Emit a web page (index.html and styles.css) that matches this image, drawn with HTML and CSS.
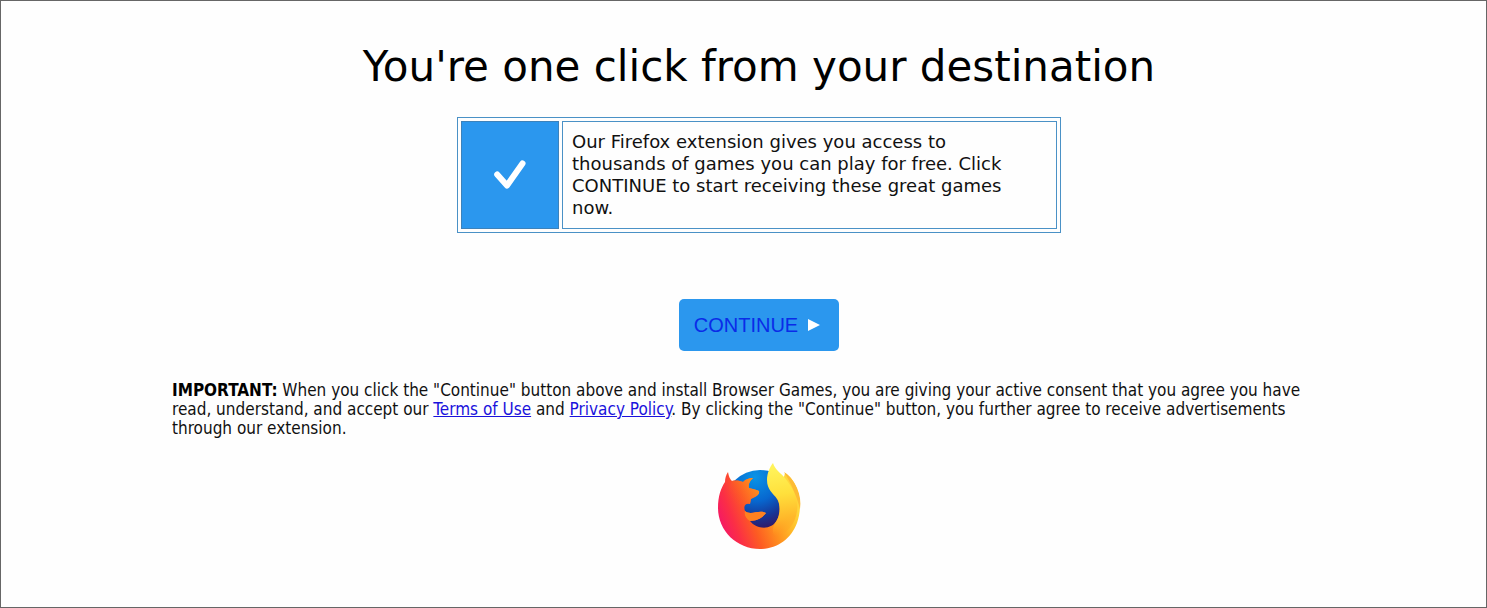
FILE: index.html
```html
<!DOCTYPE html>
<html lang="en">
<head>
<meta charset="utf-8">
<meta name="viewport" content="width=device-width, initial-scale=1">
<title>Browser Games</title>
<link rel="stylesheet" href="styles.css">
</head>
<body>
<main class="page">
  <h1 class="title">You're one click from your destination</h1>
  <section class="notice">
    <div class="notice-icon">
      <svg class="check" viewBox="0 0 32 30" aria-hidden="true"><path d="M3.200 14.500L13 25.500L28.500 3.500" fill="none" stroke="#fff" stroke-width="6" stroke-linecap="round" stroke-linejoin="round"/></svg>
    </div>
    <p class="notice-text">Our Firefox extension gives you access to thousands of games you can play for free. Click CONTINUE to start receiving these great games now.</p>
  </section>
  <button class="continue" type="button">CONTINUE
    <svg class="arrow" viewBox="0 0 12 12" aria-hidden="true"><path d="M0 0L12 6L0 12Z" fill="#fff"/></svg>
  </button>
  <p class="terms"><strong>IMPORTANT:</strong> When you click the "Continue" button above and install Browser Games, you are giving your active consent that you agree you have read, understand, and accept our <a href="#terms">Terms of Use</a> and <a href="#privacy">Privacy Policy</a>. By clicking the "Continue" button, you further agree to receive advertisements through our extension.</p>
  <svg class="logo" viewBox="0 0 84 88" role="img" aria-label="Firefox">
    <defs>
      <radialGradient id="globe" gradientUnits="userSpaceOnUse" cx="38" cy="14" r="54">
        <stop offset="0" stop-color="#0a94e6"/><stop offset=".45" stop-color="#0767cf"/><stop offset=".75" stop-color="#173596"/><stop offset="1" stop-color="#36145f"/>
      </radialGradient>
      <linearGradient id="body" gradientUnits="userSpaceOnUse" x1="2" y1="64" x2="76" y2="36">
        <stop offset="0" stop-color="#f4146a"/><stop offset=".2" stop-color="#fb2f45"/><stop offset=".42" stop-color="#fd5c22"/><stop offset=".65" stop-color="#ff8f1e"/><stop offset=".85" stop-color="#ffbb28"/><stop offset="1" stop-color="#ffd53a"/>
      </linearGradient>
      <linearGradient id="face" gradientUnits="userSpaceOnUse" x1="16" y1="38" x2="38" y2="24">
        <stop offset="0" stop-color="#fb4a30" stop-opacity="0"/><stop offset="1" stop-color="#ff8a1c"/>
      </linearGradient>
      <linearGradient id="tail" gradientUnits="userSpaceOnUse" x1="58" y1="4" x2="68" y2="72">
        <stop offset="0" stop-color="#fff35a"/><stop offset=".4" stop-color="#ffe03c"/><stop offset=".75" stop-color="#ffb82a"/><stop offset="1" stop-color="#ff9a20" stop-opacity="0"/>
      </linearGradient>
    </defs>
    <circle cx="43" cy="43" r="36" fill="url(#globe)"/>
    <path d="M11 9C12 14 13 16 15 18C19 17 24 18 26 19C29 16 32 15 36 15C33 18 31 21 32 25C36 26 40 27 42 28C43 32 38 34 34 36L33 41C29 40 26 42 28 48C34 53 42 46 49 50C46 54 41 58 33 58C40 67 55 67 60 57C63 51 63 43 61 37L68 10C73 13 77 18 80 26C84 37 84 48 80 60C74 76 60 86 43 86C20 86 1 68 1 45C1 33 4 25 8 19C8 15 9 12 11 9Z" fill="url(#body)"/>
    <path d="M15 18C19 17 24 18 26 19C29 16 32 15 36 15C33 18 31 21 32 25C36 26 40 27 42 28C43 32 38 34 34 36L33 41C28 39 23 41 18 42C12 36 9 27 15 18Z" fill="url(#face)"/>
    <path d="M28 48C34 53 42 46 49 50C46 54 41 58 33 58C29 56 27 52 28 48Z" fill="#ff8120"/>
    <path d="M56 0C58 7 64 10 68 15C75 24 82 35 80 48C78 62 70 70 60 74C54 71 55 64 60 57C64 50 64 42 60 36C56 30 50 27 50 17C50 10 53 4 56 0Z" fill="url(#tail)"/>
    <path d="M67 9C72 12 77 18 80 25C83 32 84 39 83 46C80 34 75 22 67 9Z" fill="#fdbb34"/>
  </svg>
</main>
</body>
</html>
```
FILE: styles.css
```css
* { box-sizing: border-box; }
body {
  margin: 0;
  background: #fefefe;
  color: #111;
  font-family: "DejaVu Sans", sans-serif;
}
.page {
  display: flex;
  flex-direction: column;
  align-items: center;
  min-height: 100vh;
  padding: 40px 140px 40px 171px;
  border: 1px solid #666;
}
.title {
  margin: 0 0 25px;
  color: #000;
  font-size: 42px;
  font-weight: 400;
  line-height: 51px;
  text-align: center;
}
.notice {
  display: flex;
  gap: 3px;
  width: 100%;
  max-width: 604px;
  padding: 3px;
  border: 1px solid #4a91c6;
}
.notice-icon {
  display: flex;
  flex: 0 0 98px;
  align-items: center;
  justify-content: center;
  border: 1px solid #3c82bb;
  background: #2b97ee;
}
.check { width: 32px; height: 30px; }
.notice-text {
  flex: 1;
  margin: 0;
  padding: 9px 40px 9px 9px;
  border: 1px solid #4a91c6;
  font-size: 18px;
  line-height: 22px;
}
.continue {
  display: flex;
  align-items: center;
  gap: 10px;
  margin: 66px 0 30px;
  padding: 14px 19px 14px 15px;
  border: 0;
  border-radius: 5px;
  background: #2b97ee;
  color: #0a2be8;
  font-family: "Liberation Sans", Arial, sans-serif;
  font-size: 20px;
  line-height: 24px;
}
.arrow { width: 12px; height: 12px; }
.terms {
  width: 100%;
  margin: 0 0 25px;
  padding-right: 26px;
  font-family: "DejaVu Sans Condensed", "DejaVu Sans", sans-serif;
  font-size: 17px;
  line-height: 19px;
}
.terms strong { color: #000; }
.terms a { color: #1a12dc; }
.logo { width: 84px; height: 88px; }
```
